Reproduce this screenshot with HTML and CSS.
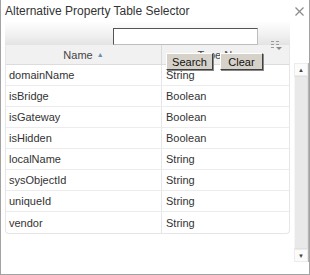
FILE: index.html
```html
<!DOCTYPE html>
<html lang="en">
<head>
  <meta charset="UTF-8">
  <title>Alternative Property Table Selector</title>
  <link rel="stylesheet" href="styles.css">
</head>
<body>
  <div class="window">
    <div class="titlebar">
      <span>Alternative Property Table Selector</span>
      <svg class="close" width="9" height="9" viewBox="0 0 9 9">
        <path d="M0.5 0.5 L8.5 8.5 M8.5 0.5 L0.5 8.5" stroke="#8a8a8a" stroke-width="1.2" fill="none"/>
      </svg>
    </div>

    <div class="content">
      <div class="panel">
        <div class="toolbar">
          <input type="text" class="search-box">
        </div>

        <svg class="col-menu" width="13" height="12" viewBox="0 0 13 12">
          <path d="M1 1.5h3M6 1.5h3M1 4.5h3M6 4.5h3M1 7.5h3" stroke="#9a9a9a" stroke-width="1" fill="none"/>
          <path d="M6 7 L12 7 L9 10 Z" fill="#8a8a8a"/>
        </svg>

        <div class="grid">
          <div class="row header">
            <div class="cell name">Name <span class="sort">&#9650;</span></div>
            <div class="cell type">Type Name</div>
          </div>
          <div class="row"><div class="cell name">domainName</div><div class="cell type">String</div></div>
          <div class="row"><div class="cell name">isBridge</div><div class="cell type">Boolean</div></div>
          <div class="row"><div class="cell name">isGateway</div><div class="cell type">Boolean</div></div>
          <div class="row"><div class="cell name">isHidden</div><div class="cell type">Boolean</div></div>
          <div class="row"><div class="cell name">localName</div><div class="cell type">String</div></div>
          <div class="row"><div class="cell name">sysObjectId</div><div class="cell type">String</div></div>
          <div class="row"><div class="cell name">uniqueId</div><div class="cell type">String</div></div>
          <div class="row last"><div class="cell name">vendor</div><div class="cell type">String</div></div>
        </div>

        <div class="search-buttons">
          <button class="btn btn-search">Search</button>
          <button class="btn btn-clear">Clear</button>
        </div>
      </div>

      <div class="scrollbar">
        <div class="arrow up"><span>&#9650;</span></div>
        <div class="thumb"></div>
        <div class="arrow down"><span>&#9660;</span></div>
      </div>
    </div>
  </div>
</body>
</html>
```

FILE: styles.css
```css
* {
  box-sizing: border-box;
}
body {
  margin: 0;
  background: #fff;
  font-family: "Liberation Sans", Arial, sans-serif;
}
.window {
  width: 310px;
  height: 275px;
  border: 1px solid #a3a3a3;
  border-top: none;
  background: #fff;
}
.titlebar {
  height: 21px;
  display: flex;
  align-items: center;
  justify-content: space-between;
  padding: 0 5px 0 4px;
  font-size: 12px;
  color: #333;
}
.close {
  margin-top: 1px;
}
.content {
  display: flex;
  padding-left: 4px;
}
.panel {
  position: relative;
  width: 285px;
}
.toolbar {
  height: 24px;
  padding: 7px 0 0 108px;
  background: linear-gradient(#ffffff, #f0f0f0 60%, #e3e3e3);
}
.search-box {
  display: block;
  width: 145px;
  height: 17px;
  margin: 0;
  padding: 0;
  border: 1px solid #bdbdbd;
  border-top-color: #555;
  border-left-color: #555;
  background: #fff;
}
.col-menu {
  position: absolute;
  left: 265px;
  top: 19px;
}
.grid {
  border: 1px solid #e6e6e6;
  border-top: none;
  border-radius: 0 0 4px 4px;
  font-size: 11px;
  color: #333;
}
.row {
  display: flex;
  height: 21px;
  border-bottom: 1px solid #ececec;
}
.row.last {
  border-bottom: none;
}
.cell {
  display: flex;
  align-items: center;
}
.cell.name {
  width: 156px;
  padding-left: 3px;
  border-right: 1px solid #e6e6e6;
}
.cell.type {
  flex: 1;
  padding-left: 4px;
}
.row.header {
  height: 20px;
  background: #f1f1f1;
  border-bottom: 1px solid #dcdcdc;
  color: #444;
}
.row.header .cell {
  justify-content: center;
  padding-left: 0;
  border-right-color: #dadada;
}
.sort {
  font-size: 7px;
  color: #6b8db5;
  margin-left: 4px;
}
.search-buttons {
  position: absolute;
  left: 161px;
  top: 32px;
  display: flex;
  gap: 7px;
}
.btn {
  height: 17px;
  padding: 0;
  background: #d6d2ca;
  border: 1px solid #fff;
  border-right-color: #404040;
  border-bottom-color: #404040;
  box-shadow: 1px 1px 0 #888;
  font-family: "Liberation Sans", Arial, sans-serif;
  font-size: 11px;
  color: #111;
}
.btn-search {
  width: 47px;
}
.btn-clear {
  width: 43px;
}
.scrollbar {
  display: flex;
  flex-direction: column;
  width: 15px;
  height: 199px;
  margin: 42px 0 0 4px;
  border-right: 1px solid #b5b5b5;
  background: #f4f4f4;
}
.arrow {
  height: 13px;
  display: flex;
  align-items: center;
  justify-content: center;
  background: #fbfbfb;
  border: 1px solid #ececec;
  font-size: 6px;
  color: #444;
}
.thumb {
  flex: 1;
  background: #e9e9e9;
  border: 1px solid #e0e0e0;
  border-left-color: #f6f6f6;
}
```
